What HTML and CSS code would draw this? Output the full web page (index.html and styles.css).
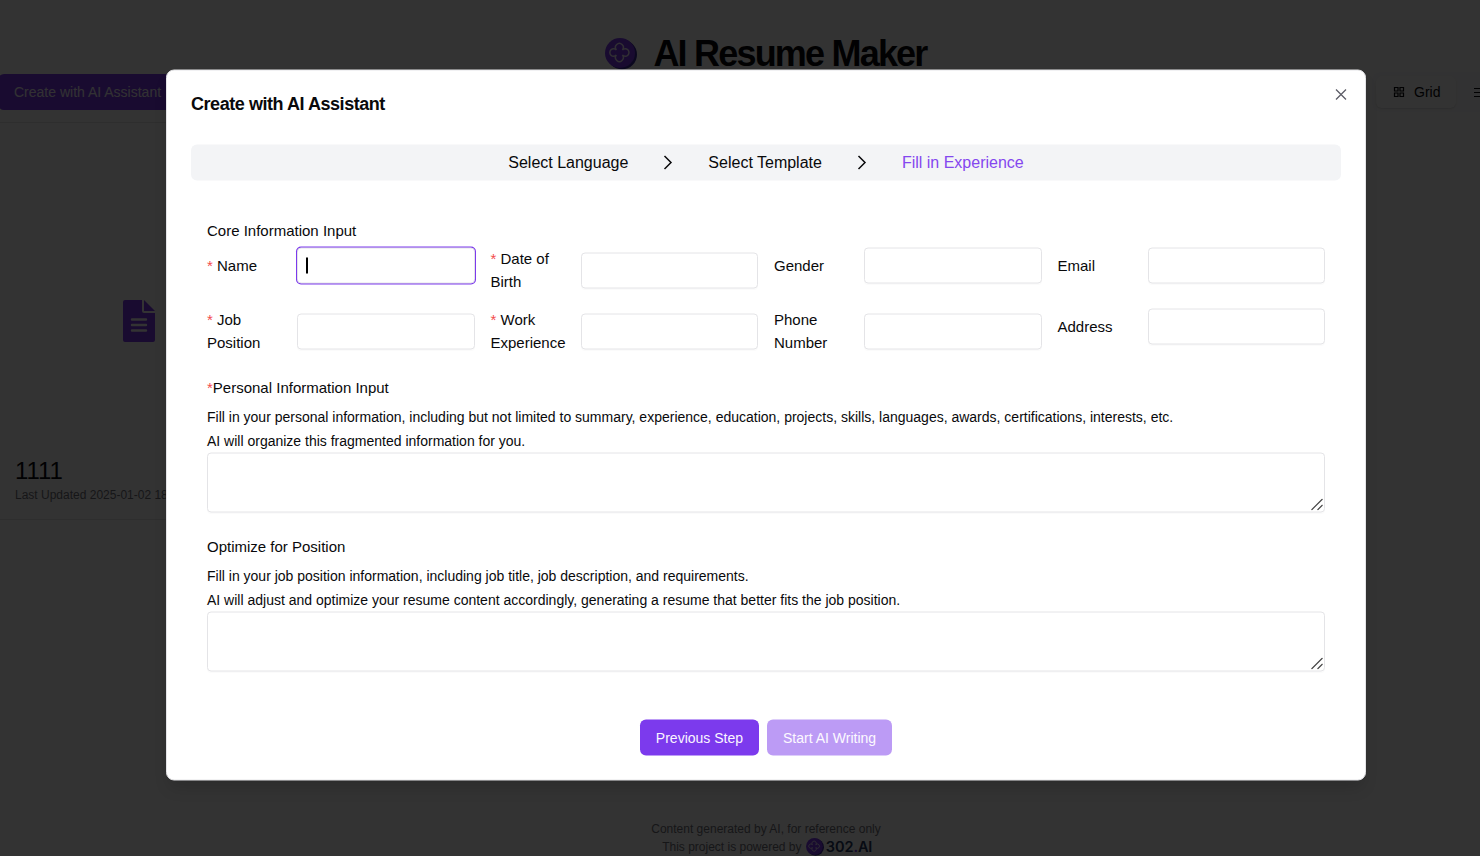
FILE: index.html
```html
<!DOCTYPE html>
<html lang="en">
<head>
<meta charset="utf-8">
<title>AI Resume Maker</title>
<link rel="stylesheet" href="styles.css">
</head>
<body>
<svg class="defs" width="0" height="0">
  <symbol id="logo" viewBox="0 0 32 32">
    <circle cx="17" cy="16.5" r="15" fill="#3b2a9c"/>
    <circle cx="15" cy="15" r="15" fill="#7c3aed"/>
    <path d="M11.400 11.900a3.900 3.900 0 1 1 6 0a3.800 3.800 0 1 1 0 5.200a3.900 3.900 0 1 1-6 0a3.800 3.800 0 1 1 0-5.200Z" fill="none" stroke="#fff" stroke-opacity=".9" stroke-width="1.500"/>
  </symbol>
</svg>
<div class="page">
  <header class="brand"><svg class="brand-logo"><use href="#logo"/></svg><h1>AI Resume Maker</h1></header>
  <div class="toolbar">
    <button class="btn create">Create with AI Assistant</button>
    <div class="tabs">
      <span class="tab active"><svg width="12" height="12" viewBox="0 0 12 12" fill="none" stroke="currentColor" stroke-width="1.200"><path d="M1.500 1.500h3.500v3.500h-3.500zM7 1.500h3.500v3.500h-3.500zM1.500 7h3.500v3.500h-3.500zM7 7h3.500v3.500h-3.500z"/></svg>Grid</span>
      <span class="tab"><svg width="12" height="12" viewBox="0 0 12 12" fill="none" stroke="currentColor" stroke-width="1"><path d="M1 2.500h10M1 6.500h10M1 10.500h10"/></svg></span>
    </div>
  </div>
  <main class="cards">
    <article class="card">
      <div class="preview"><svg width="32" height="42" viewBox="0 0 32 42" fill="#7c3aed"><path fill-rule="evenodd" d="M2 0h17v11q0 2 2 2h11v27q0 2-2 2H2q-2 0-2-2V2q0-2 2-2ZM9 18.300a1.200 1.200 0 0 0 0 2.400h14a1.200 1.200 0 0 0 0-2.400ZM9 23.800a1.200 1.200 0 0 0 0 2.400h14a1.200 1.200 0 0 0 0-2.400ZM9 29.300a1.200 1.200 0 0 0 0 2.400h14a1.200 1.200 0 0 0 0-2.400Z"/><path d="M21 0l11 11H21Z"/></svg></div>
      <h2>1111</h2>
      <p>Last Updated 2025-01-02 18:20</p>
    </article>
  </main>
  <footer class="footer">
    <span>Content generated by AI, for reference only</span>
    <span class="powered">This project is powered by <svg class="mini-logo"><use href="#logo"/></svg><b>302<i>.</i>AI</b></span>
  </footer>
</div>
<div class="overlay">
  <section class="dialog">
    <div class="dialog-head">
      <h3>Create with AI Assistant</h3>
      <svg class="close" width="16" height="16" viewBox="0 0 16 16" fill="none" stroke="#5c5c66" stroke-width="1.25"><path d="M3 3l10 10M13 3L3 13"/></svg>
    </div>
    <nav class="steps">
      <span>Select Language</span>
      <svg width="24" height="24" viewBox="0 0 24 24" fill="none" stroke="currentColor" stroke-width="1.500"><path d="M8.500 5.500l6.500 6.500-6.500 6.500"/></svg>
      <span>Select Template</span>
      <svg width="24" height="24" viewBox="0 0 24 24" fill="none" stroke="currentColor" stroke-width="1.500"><path d="M8.500 5.500l6.500 6.500-6.500 6.500"/></svg>
      <span class="current">Fill in Experience</span>
    </nav>
    <form class="form">
      <h4>Core Information Input</h4>
      <div class="fields">
        <div class="field"><label><em>*</em> Name</label><div class="input focused"><span class="caret"></span></div></div>
        <div class="field"><label><em>*</em> Date of Birth</label><input class="input"></div>
        <div class="field"><label>Gender</label><input class="input"></div>
        <div class="field"><label>Email</label><input class="input"></div>
        <div class="field"><label><em>*</em> Job Position</label><input class="input"></div>
        <div class="field"><label><em>*</em> Work Experience</label><input class="input"></div>
        <div class="field"><label>Phone Number</label><input class="input"></div>
        <div class="field"><label>Address</label><input class="input"></div>
      </div>
      <div class="block">
        <h4><em>*</em>Personal Information Input</h4>
        <p>Fill in your personal information, including but not limited to summary, experience, education, projects, skills, languages, awards, certifications, interests, etc.</p>
        <p>AI will organize this fragmented information for you.</p>
        <div class="area"><textarea></textarea><svg class="grip" viewBox="0 0 12 12"><path d="M.5 11.500l11-11M6.500 11.500l5-5"/></svg></div>
      </div>
      <div class="block">
        <h4>Optimize for Position</h4>
        <p>Fill in your job position information, including job title, job description, and requirements.</p>
        <p>AI will adjust and optimize your resume content accordingly, generating a resume that better fits the job position.</p>
        <div class="area"><textarea></textarea><svg class="grip" viewBox="0 0 12 12"><path d="M.5 11.500l11-11M6.500 11.500l5-5"/></svg></div>
      </div>
    </form>
    <div class="actions"><button class="btn">Previous Step</button><button class="btn disabled">Start AI Writing</button></div>
  </section>
</div>
</body>
</html>
```
FILE: styles.css
```css
* { box-sizing: border-box; }
html, body { margin: 0; height: 856px; overflow: hidden; }
body { font-family: "Liberation Sans", Arial, sans-serif; color: #09090b; background: #fff; }
h1, h2, h3, h4, p { margin: 0; }
em { font-style: normal; color: #f34b4b; }
.defs { position: absolute; }
.page { width: 1532px; height: 856px; overflow: hidden; display: flex; flex-direction: column; }
.brand { display: flex; justify-content: center; align-items: center; gap: 16px; height: 74px; padding-top: 34px; }
.brand-logo { width: 32px; height: 32px; }
.brand h1 { font-size: 36px; line-height: 40px; letter-spacing: -1.8px; }
.toolbar { display: flex; justify-content: space-between; align-items: flex-start; height: 48px; }
.btn { height: 36px; padding: 0 16px; border: 0; border-radius: 6px; background: #7c3aed; color: #faf5ff; font: 14px "Liberation Sans", Arial, sans-serif; white-space: nowrap; }
.btn.create { margin-left: -2px; }
.tabs { display: flex; padding: 4px; margin-top: -2px; width: 160px; height: 40px; border-radius: 8px; background: #fbfbfc; }
.tab { display: flex; flex: none; align-items: center; gap: 9px; height: 32px; width: 80px; padding-left: 17px; border-radius: 6px; font-size: 14px; }
.tab.active { background: #fff; box-shadow: 0 1px 2px #0002; }
.cards { height: 398px; }
.card { width: 310px; height: 398px; padding: 0 15px; border: solid #e4e4e7; border-width: 1px 0; }
.preview { height: 334px; padding: 177px 0 0 108px; }
.card h2 { font-size: 24px; font-weight: 400; line-height: 28px; letter-spacing: -.1px; }
.card p { font-size: 12px; line-height: 20px; color: #71717a; }
.footer { margin-top: 300px; display: flex; flex-direction: column; align-items: center; font-size: 12px; line-height: 18px; color: #71717a; }
.powered { display: flex; align-items: center; height: 18px; white-space: pre; }
.mini-logo { width: 18px; height: 18px; margin: 0 2px 0 1px; }
.powered b { font: 600 14.500px/18px Inter, sans-serif; width: 44px; letter-spacing: -.1px; color: #27375f; }
.powered i { font-style: normal; color: #7c3aed; }
.overlay { position: absolute; inset: 0; background: rgba(0, 0, 0, .8); }
.dialog { position: absolute; left: 166px; top: 425px; width: 1200px; height: 711px; transform: translateY(-50%); padding: 24px; border: 1px solid #e4e4e7; border-radius: 8px; background: #fff; box-shadow: 0 10px 15px -3px #0002; }
.dialog-head { display: flex; justify-content: space-between; height: 50px; }
.dialog-head h3 { font-size: 18px; line-height: 18px; letter-spacing: -.45px; }
.close { margin: -8px -8px 0 0; }
.steps { display: flex; align-items: center; justify-content: center; gap: 28px; height: 36px; border-radius: 6px; background: #f3f4f6; font-size: 16px; }
.steps .current { color: #8447ef; }
.form { padding: 39px 16px 0; }
.form h4 { font-size: 15px; line-height: 22.500px; font-weight: 400; }
.fields { display: grid; grid-template-columns: repeat(4, 1fr); gap: 16px; align-items: start; margin-top: 5.500px; }
.field { display: flex; align-items: center; }
.field label { width: 90px; flex: none; padding-right: 10px; font-size: 15px; line-height: 22.500px; }
.input { flex: 1; min-width: 0; width: 0; height: 36px; border: 1px solid #e4e4e7; border-radius: 4px; background: #fff; box-shadow: 0 1px 1px #00000005; outline: 0; }
.input.focused { padding: 9px 0 0 8px; box-shadow: 0 0 0 1px #7c3aed; }
.caret { display: block; width: 2px; height: 16px; background: #000; }
.block { margin-top: 23px; }
.block h4 { margin-bottom: 5.500px; }
.fields + .block h4 { margin-bottom: 5px; }
.block p { font-size: 14px; line-height: 24px; white-space: nowrap; }
.area { position: relative; height: 60px; }
.area textarea { display: block; width: 100%; height: 60px; border: 1px solid #e4e4e7; border-radius: 4px; resize: none; box-shadow: 0 1px 1px #00000005; }
.grip { position: absolute; right: 2px; bottom: 2px; width: 12px; height: 12px; fill: none; stroke: #444; stroke-width: 1.1; }
.actions { display: flex; justify-content: center; gap: 8px; margin-top: 48px; }
.btn.disabled { opacity: .5; }
```
